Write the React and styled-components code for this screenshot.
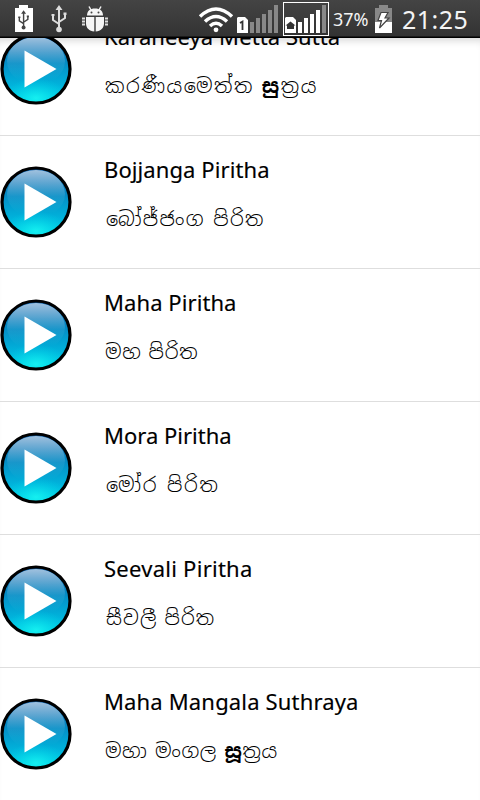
import styled, { createGlobalStyle } from 'styled-components';

const GlobalStyle = createGlobalStyle`
	* {
		box-sizing: border-box;
	}
	body {
		margin: 0;
		background-color: #fff;
	}
`;

const Screen = styled.div`
	display: flex;
	flex-direction: column;
	width: 480px;
	height: 800px;
	overflow: hidden;
	background-color: #fff;
	font-family: 'Noto Sans', 'Open Sans', sans-serif;
`;

const StatusBar = styled.header`
	display: flex;
	flex: none;
	height: 38px;
	background: linear-gradient(#444 0, #333 36px, #000 37px);
	color: #f4f4f4;
`;

const StatusIcons = styled.svg`
	flex: none;
	display: block;
`;

const Percent = styled.span`
	width: 42px;
	padding-left: 1px;
	font-size: 18px;
	line-height: 39px;
	letter-spacing: -0.1px;
	white-space: nowrap;
`;

const Clock = styled.span`
	padding-left: 8px;
	font-size: 25px;
	line-height: 38px;
	letter-spacing: 0.5px;
	white-space: nowrap;
`;

const Viewport = styled.main`
	flex: 1;
	min-height: 0;
	display: flex;
	flex-direction: column;
	justify-content: flex-end;
	overflow: hidden;
	box-shadow: inset 0 8px 8px -6px rgba(0, 0, 0, 0.18);
`;

const List = styled.ul`
	flex: none;
	margin: 0 0 -1px;
	padding: 0;
	list-style: none;
`;

const Row = styled.li`
	display: flex;
	align-items: center;
	height: 133px;
	border-bottom: 1px solid ${(props) => (props.$last ? 'transparent' : '#dedede')};
`;

const PlayButton = styled.svg`
	flex: none;
	display: block;
	width: 72px;
	height: 72px;
	margin-right: 32px;
`;

const Labels = styled.div`
	display: flex;
	flex-direction: column;
	gap: 20px;
	padding-bottom: 17px;
	color: #000;
	white-space: nowrap;
`;

const Title = styled.div`
	font-size: 22px;
	line-height: 30px;
	letter-spacing: ${(props) => props.$spacing}px;
	-webkit-text-stroke: 0.15px #000;
`;

const Subtitle = styled.div`
	padding-left: ${(props) => props.$indent || 1}px;
	font-family: 'Noto Sans Sinhala', 'Noto Sans', sans-serif;
	font-size: 20px;
	font-weight: 300;
	line-height: 30px;
	letter-spacing: ${(props) => props.$spacing}px;
	word-spacing: ${(props) => props.$gap || -4}px;

	b {
		font-weight: 700;
	}
`;

const tracks = [
	{
		title: 'Karaneeya Metta Sutta',
		spacing: 0.09,
		sinhala: <>කරණීයමෙත්ත <b>සු</b>ත්‍රය</>,
		sinhalaSpacing: 1.6,
	},
	{ title: 'Bojjanga Piritha', spacing: 0.09, sinhala: 'බෝජ්ජංග පිරිත', sinhalaSpacing: 1.4, gap: -3, indent: 2 },
	{ title: 'Maha Piritha', spacing: 0.08, sinhala: 'මහ පිරිත', sinhalaSpacing: 0.8 },
	{ title: 'Mora Piritha', spacing: 0, sinhala: 'මෝර පිරිත', sinhalaSpacing: 1.7, gap: -3, indent: 2 },
	{ title: 'Seevali Piritha', spacing: 0.26, sinhala: 'සීවලී පිරිත', sinhalaSpacing: 1.1, indent: 2 },
	{
		title: 'Maha Mangala Suthraya',
		spacing: 0.16,
		sinhala: <>මහා මංගල <b>සූ</b>ත්‍රය</>,
		sinhalaSpacing: 0.6,
		gap: -3,
	},
];

const UsbMark = () => (
	<g fill="none" stroke="currentColor" strokeWidth="2">
		<path d="M59 9v20M53 15v5l6 4M65 14v4l-6 4" />
		<path d="M59 5l3.5 5h-7zM51.5 14h3v2h-3zM63.5 12.5h3v2.5h-3z" fill="currentColor" stroke="none" />
		<circle cx="59" cy="29.5" r="2.8" fill="currentColor" stroke="none" />
	</g>
);

const Notifications = () => (
	<StatusIcons width="197" height="38" viewBox="0 0 197 38">
		<path d="M19 5h9v3h5v24H15V8h4z" fill="#fff" />
		<g transform="translate(-18.3 6.6) scale(.71)" color="#444">
			<UsbMark />
		</g>
		<g color="#ddd">
			<UsbMark />
		</g>
		<g fill="#f5f5f5">
			<path d="M87 15.5c0-4.500 3-7 8-7s8 2.500 8 7z" />
			<path d="M86 17h8.300v14.500c-5-.3-8.300-3.500-8.300-8zM95.700 17h8.300v6.500c0 4.500-3.300 7.700-8.300 8z" />
		</g>
		<path d="M91 10l-2-3.500M99 10l2-3.500" stroke="#f5f5f5" strokeWidth="1.500" />
		<path
			d="M82 18.500h3M82 21.500h3M82 24.500h3M105 18.500h3M105 21.500h3M105 24.500h3"
			stroke="#ddd"
			strokeWidth="2"
		/>
		<circle cx="91.500" cy="12.500" r="1" fill="#444" />
		<circle cx="98.500" cy="12.500" r="1" fill="#444" />
	</StatusIcons>
);

const Signals = () => (
	<StatusIcons width="135" height="38" viewBox="197 0 135 38">
		<g fill="none" stroke="#fff" strokeWidth="3.500">
			<path d="M200 16.500q16-15 32 0" />
			<path d="M205 21.500q11-10 22 0" />
			<path d="M210 26q6-5.500 12 0" />
		</g>
		<circle cx="216" cy="29.800" r="2.400" fill="#fff" />
		<path d="M238 17h7l3 3v13h-11V18z" fill="#fff" />
		<path d="M240 23l2.500-1.500V30" fill="none" stroke="#333" strokeWidth="1.800" />
		<path d="M250 22h4v11h-4zM256 18h4v15h-4zM262 14h4v19h-4zM268 10h4v23h-4zM274 5h4v28h-4z" fill="#888" />
		<rect x="283.500" y="2.500" width="45" height="33" fill="none" stroke="#fff" />
		<path d="M286 17h7l3 3v13h-11V18z" fill="#fff" />
		<path d="M290.500 21.500l5 4H294V29h-7v-3.500h-1.500z" fill="#333" />
		<path d="M298 22h4v11h-4zM304 18h4v15h-4zM310 14h4v19h-4zM316 10h4v23h-4z" fill="#fff" />
		<path d="M322 5h4v28h-4z" fill="#888" />
	</StatusIcons>
);

const Battery = () => (
	<StatusIcons width="20" height="38" viewBox="374 0 20 38">
		<path d="M379 5h9v3h4v14h-17V8h4z" fill="#888" />
		<path d="M375 22h17v11h-17z" fill="#fff" />
		<path d="M381 12.500h7l-3 5.500h4l-9.500 10 2-7.500H378z" fill="#fff" stroke="#444" strokeWidth="1.200" />
	</StatusIcons>
);

const PlayIcon = () => (
	<PlayButton viewBox="0 0 72 72">
		<defs>
			<linearGradient id="disc" x1="0" y1="0" x2="0" y2="1">
				<stop offset="0" stopColor="#075aa8" />
				<stop offset="0.500" stopColor="#0498cc" />
				<stop offset="0.750" stopColor="#00b4dc" />
				<stop offset="1" stopColor="#00d4e8" />
			</linearGradient>
			<linearGradient id="gloss" x1="0" y1="0" x2="0" y2="1">
				<stop offset="0" stopColor="#fff" stopOpacity="0.620" />
				<stop offset="0.550" stopColor="#fff" stopOpacity="0.080" />
				<stop offset="0.900" stopColor="#fff" stopOpacity="0" />
			</linearGradient>
			<radialGradient id="glow">
				<stop offset="0" stopColor="#1ffff5" stopOpacity="0.700" />
				<stop offset="1" stopColor="#00e8f0" stopOpacity="0" />
			</radialGradient>
			<clipPath id="rim">
				<circle cx="36" cy="36" r="34" />
			</clipPath>
		</defs>
		<g clipPath="url(#rim)">
			<circle cx="36" cy="36" r="34" fill="url(#disc)" />
			<ellipse cx="36" cy="65" rx="32" ry="20" fill="url(#glow)" />
			<ellipse cx="36" cy="28" rx="29" ry="24" fill="url(#gloss)" />
		</g>
		<circle cx="36" cy="36" r="34" fill="none" stroke="#000" strokeWidth="3.200" />
		<path d="M24.500 17.500v37L56.500 36z" fill="#fff" />
	</PlayButton>
);

const App = () => {
	return (
		<Screen>
			<GlobalStyle />
			<StatusBar>
				<Notifications />
				<Signals />
				<Percent>37%</Percent>
				<Battery />
				<Clock>21:25</Clock>
			</StatusBar>
			<Viewport>
				<List>
					{tracks.map((track, i) => (
						<Row key={track.title} $last={i === tracks.length - 1}>
							<PlayIcon />
							<Labels>
								<Title $spacing={track.spacing}>{track.title}</Title>
								<Subtitle $spacing={track.sinhalaSpacing} $indent={track.indent} $gap={track.gap}>
									{track.sinhala}
								</Subtitle>
							</Labels>
						</Row>
					))}
				</List>
			</Viewport>
		</Screen>
	);
};

export default App;
